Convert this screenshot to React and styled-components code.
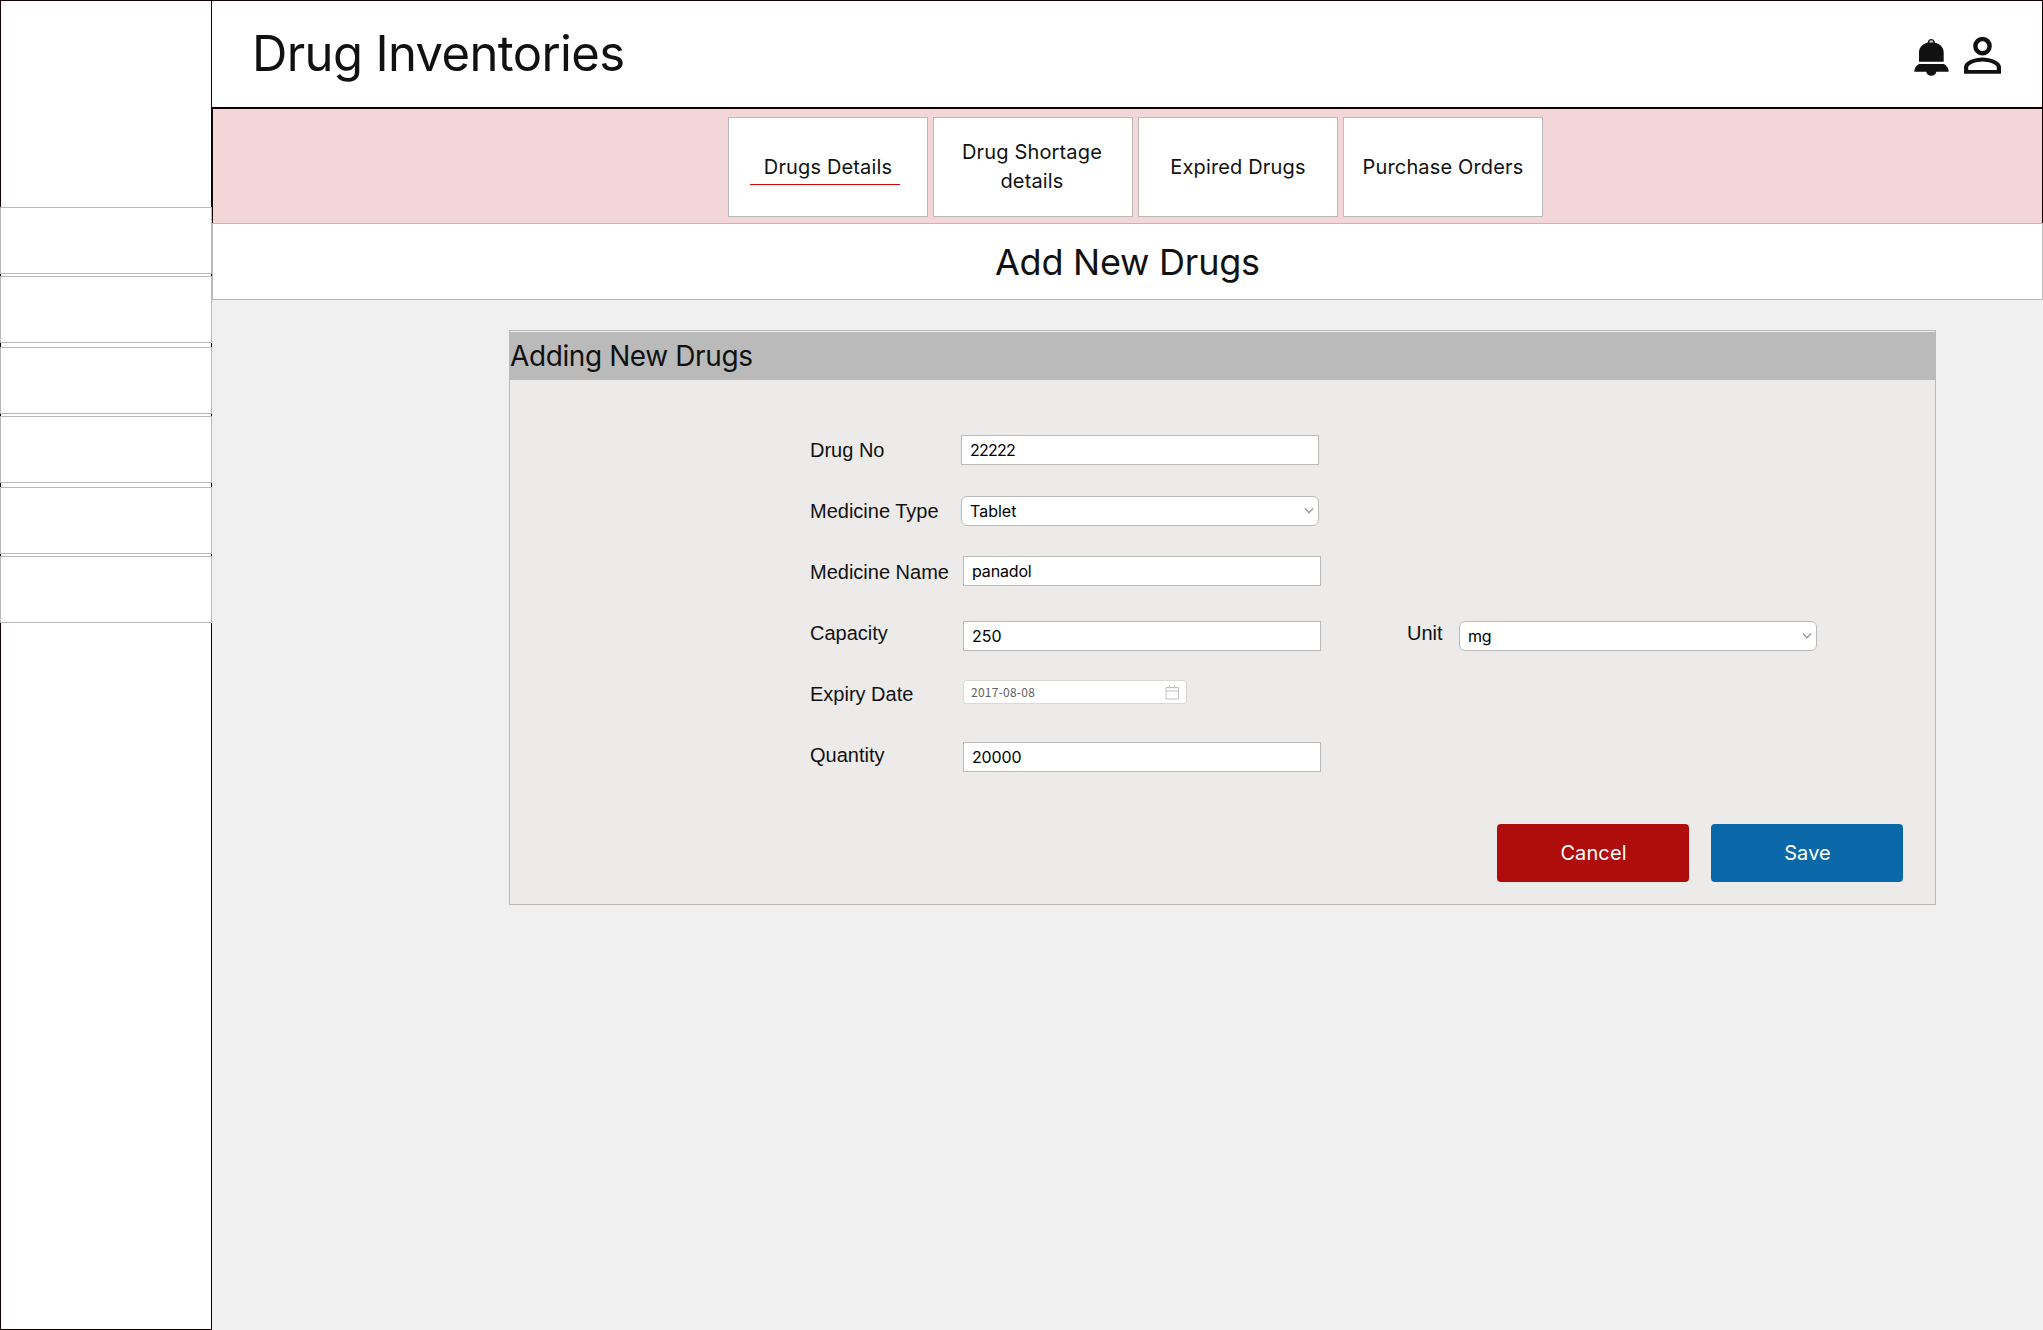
import React from "react";
import styled, { createGlobalStyle } from "styled-components";

const line = "#bababa";
const ink = "#100003";

const GlobalStyle = createGlobalStyle`
  * { box-sizing: border-box; }
  body {
    margin: 0;
    background: #f0f0f0;
    color: #111;
    font-family: Inter, "Liberation Sans", sans-serif;
  }
`;

const Page = styled.div`
  display: flex;
  width: 2043px;
  height: 1330px;
  overflow: hidden;
`;

const Sidebar = styled.aside`
  width: 212px;
  flex: none;
  background: #fff;
  border: 1px solid ${ink};
`;

const Menu = styled.nav`
  display: flex;
  flex-direction: column;
  margin: 206px -1px 0;
`;

const MenuItem = styled.div`
  height: 67px;
  margin-bottom: ${(p) => (p.$last ? 4 : 2)}px;
  background: #fff;
  border: 1px solid ${line};
`;

const Main = styled.main`
  flex: 1;
  min-width: 0;
`;

const Header = styled.header`
  height: 108px;
  display: flex;
  justify-content: space-between;
  background: #fff;
  border: solid ${ink};
  border-width: 1px 1px 1px 0;
  padding: 0 41px 0 40px;
`;

const PageTitle = styled.h1`
  margin: 22px 0 0;
  font-size: 49px;
  line-height: 62px;
  font-weight: 400;
  letter-spacing: -0.63px;
`;

const HeaderIcons = styled.div`
  display: flex;
  align-items: flex-start;
  gap: 15px;
  padding-top: 36px;
`;

const Tabs = styled.div`
  height: 115px;
  display: flex;
  gap: 5px;
  padding: 8px 0 0 515px;
  background: #f3d7d8;
  border: solid ${ink};
  border-width: 1px 1px 0 1px;
`;

const Tab = styled.div`
  width: 200px;
  height: 100px;
  display: flex;
  align-items: center;
  justify-content: center;
  text-align: center;
  position: relative;
  background: #fff;
  border: 1px solid ${line};
  font-size: 20px;
  font-weight: 400;
  line-height: 29px;
  letter-spacing: 0.15px;
  padding: 0 ${(p) => (p.$wrap ? 20 : 18)}px 0 18px;
  white-space: ${(p) => (p.$wrap ? "normal" : "nowrap")};
`;

const ActiveMark = styled.span`
  position: absolute;
  left: 21px;
  top: 66px;
  width: 150px;
  height: 1px;
  background: #d80000;
`;

const SectionBar = styled.div`
  height: 77px;
  padding: 17px 0 0 782px;
  background: #fff;
  border: 1px solid ${line};
`;

const SectionTitle = styled.h2`
  margin: 0;
  font-size: 36px;
  line-height: 42px;
  font-weight: 400;
  letter-spacing: -0.25px;
`;

const Panel = styled.section`
  width: 1427px;
  height: 575px;
  margin: 30px 0 0 297px;
  padding-top: 1px;
  background: #ecebe9;
  border: 1px solid ${line};
`;

const PanelHead = styled.h3`
  margin: 0 0 54px;
  height: 48px;
  background: #bababa;
  font-size: 28px;
  line-height: 48px;
  font-weight: 400;
  letter-spacing: -0.4px;
`;

const FormRow = styled.div`
  height: 61px;
  display: flex;
  align-items: flex-start;
  padding-left: 300px;
`;

const Label = styled.label`
  font-family: "Liberation Sans", Arial, sans-serif;
  font-size: 20px;
  line-height: 32px;
  white-space: nowrap;
  width: ${(p) => p.$w}px;
  margin-left: ${(p) => p.$ml || 0}px;
`;

const Field = styled.div`
  width: 358px;
  height: 30px;
  margin-top: ${(p) => p.$mt || 0}px;
  display: flex;
  align-items: center;
  justify-content: space-between;
  padding: 0 4px 0 8px;
  background: #fff;
  border: 1px solid ${line};
  border-radius: ${(p) => (p.$select ? 6 : 0)}px;
  color: #000;
  font-size: 16px;
  font-weight: 400;
  letter-spacing: ${(p) => p.$ls || 0}px;
`;

const DateField = styled(Field)`
  width: 224px;
  height: 24px;
  padding: 0 6px 0 7px;
  border-color: #d9d9d9;
  border-radius: 3px;
  color: #606060;
  font-family: "Noto Sans CJK SC", "Noto Sans", sans-serif;
  font-size: 12px;
  line-height: 22px;
  align-items: flex-start;
`;

const DateIcon = styled.span`
  display: flex;
  padding-top: 4px;
`;

const Actions = styled.div`
  display: flex;
  justify-content: flex-end;
  gap: 22px;
  padding: 24px 32px 0 0;
`;

const Button = styled.button`
  width: 192px;
  height: 58px;
  border: 0;
  border-radius: 4px;
  background: ${(p) => p.$color};
  color: #fff;
  font: 400 20px Inter, sans-serif;
  padding: 0 0 0 1px;
  letter-spacing: 0.1px;
`;

const Chevron = () => (
  <svg width="10" height="8" viewBox="0 0 10 8" fill="none" stroke="#999" strokeWidth="1.4">
    <path d="M1 1.500 5 5.700 9 1.500" />
  </svg>
);

const CalendarIcon = () => (
  <svg width="15" height="15" viewBox="0 0 15 15" fill="none" stroke="#bfbfbf">
    <path d="M1 2.500h12.500v11.500H1zM1 6h12.500M4.500.5v3M9.500.5v3" />
  </svg>
);

const BellIcon = () => (
  <svg width="35" height="40" viewBox="0 -2 35 40" fill="#111">
    <path d="M5 22.700V13.500C5 8.500 8.500 5 13.500 3.800C13.900 1.500 15.300 0 17.300 0S20.700 1.500 21.100 3.800C26.100 5 29.700 8.500 29.700 13.500V22.700Z" />
    <path d="M15.100 3.500a2.200 2.200 0 0 1 4.400 0Z" fill="#ccc" />
    <path d="M5 25H30C33 26.600 34.700 29.500 34.700 32.700H22.300a5 4 0 0 1-10 0H.3C.3 29.500 2 26.600 5 25Z" />
  </svg>
);

const UserIcon = () => (
  <svg width="37" height="38" viewBox="0 0 37 38" fill="#111">
    <circle cx="18.500" cy="9.200" r="7.100" fill="none" stroke="#111" strokeWidth="4.400" />
    <path
      fillRule="evenodd"
      d="M0 36.800V30C0 24 11 20.400 18.500 20.400S37 24 37 30V36.800ZM4.200 33H32.800V30.300C32.800 27.500 25 24.500 18.500 24.500S4.200 27.500 4.200 30.300Z"
    />
  </svg>
);

const menuItems = [0, 1, 2, 3, 4, 5];

export default function App() {
  return (
    <>
      <GlobalStyle />
      <Page>
        <Sidebar>
          <Menu>
            {menuItems.map((i) => (
              <MenuItem key={i} $last={i % 2 === 1} />
            ))}
          </Menu>
        </Sidebar>
        <Main>
          <Header>
            <PageTitle>Drug Inventories</PageTitle>
            <HeaderIcons>
              <BellIcon />
              <UserIcon />
            </HeaderIcons>
          </Header>
          <Tabs>
            <Tab>Drugs Details<ActiveMark /></Tab>
            <Tab $wrap>Drug Shortage details</Tab>
            <Tab>Expired Drugs</Tab>
            <Tab>Purchase Orders</Tab>
          </Tabs>
          <SectionBar>
            <SectionTitle>Add New Drugs</SectionTitle>
          </SectionBar>
          <Panel>
            <PanelHead>Adding New Drugs</PanelHead>
            <FormRow>
              <Label $w={151}>Drug No</Label>
              <Field $mt={1} $ls={-0.75}>22222</Field>
            </FormRow>
            <FormRow>
              <Label $w={151}>Medicine Type</Label>
              <Field $select $mt={1}>Tablet<Chevron /></Field>
            </FormRow>
            <FormRow>
              <Label $w={153}>Medicine Name</Label>
              <Field $ls={-0.15}>panadol</Field>
            </FormRow>
            <FormRow>
              <Label $w={153}>Capacity</Label>
              <Field $mt={4}>250</Field>
              <Label $w={52} $ml={86}>Unit</Label>
              <Field $select $mt={4} $ls={-0.3}>mg<Chevron /></Field>
            </FormRow>
            <FormRow>
              <Label $w={153}>Expiry Date</Label>
              <DateField $mt={2} $ls={0.25}>
                2017-08-08
                <DateIcon><CalendarIcon /></DateIcon>
              </DateField>
            </FormRow>
            <FormRow>
              <Label $w={153}>Quantity</Label>
              <Field $mt={3} $ls={-0.15}>20000</Field>
            </FormRow>
            <Actions>
              <Button $color="#ae0d0b">Cancel</Button>
              <Button $color="#0b68a8">Save</Button>
            </Actions>
          </Panel>
        </Main>
      </Page>
    </>
  );
}
